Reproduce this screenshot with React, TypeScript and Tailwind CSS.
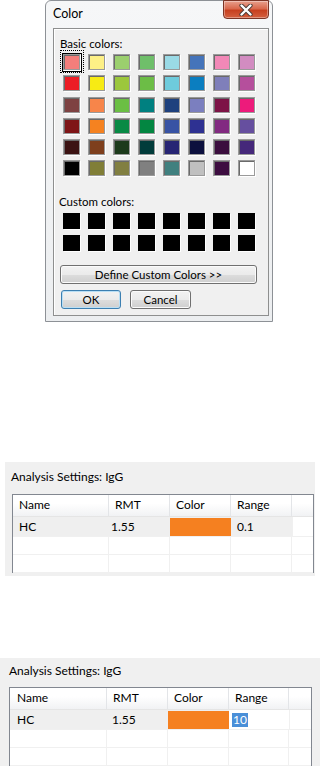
import React from 'react';

const basicColors = [
  ['bg-[#f47e7b]', 'bg-[#fdf086]', 'bg-[#9bcf6e]', 'bg-[#6fbf6a]', 'bg-[#9adae6]', 'bg-[#4574ba]', 'bg-[#f288b7]', 'bg-[#d28cc1]'],
  ['bg-[#ec1d25]', 'bg-[#f7eb14]', 'bg-[#9cc73c]', 'bg-[#6cbd46]', 'bg-[#6ecbdc]', 'bg-[#0b7ec0]', 'bg-[#7f7fba]', 'bg-[#b54f9c]'],
  ['bg-[#7e4242]', 'bg-[#f7854a]', 'bg-[#6bbf44]', 'bg-[#008080]', 'bg-[#1e417e]', 'bg-[#7b7fbf]', 'bg-[#7d1346]', 'bg-[#ed1b7b]'],
  ['bg-[#7f1517]', 'bg-[#f58220]', 'bg-[#088a45]', 'bg-[#038641]', 'bg-[#3853a4]', 'bg-[#2e3192]', 'bg-[#822a81]', 'bg-[#664f9f]'],
  ['bg-[#3c1313]', 'bg-[#7e3f1d]', 'bg-[#1c3a1b]', 'bg-[#023c3b]', 'bg-[#272574]', 'bg-[#0c103e]', 'bg-[#3b0e3e]', 'bg-[#45287a]'],
  ['bg-[#000000]', 'bg-[#807e37]', 'bg-[#817f41]', 'bg-[#808080]', 'bg-[#40807f]', 'bg-[#c0c0c0]', 'bg-[#3d0d40]', 'bg-[#ffffff]'],
];

function Swatch({ color, selected }: { color: string; selected?: boolean }) {
  return (
    <div className="relative h-[16px] w-[17px]">
      <div className={`h-full w-full border border-[#9a9a9a] shadow-[inset_1px_1px_0_#6a6a6a,1px_1px_0_#ffffff] ${color}`} />
      {selected && (
        <>
          <div className="absolute -left-px -top-px -right-[2px] -bottom-[2px] border border-black" />
          <div className="absolute -left-[3px] -top-[4px] -right-[4px] -bottom-[3px] border border-dotted border-black" />
        </>
      )}
    </div>
  );
}

function WinButton({ children, className, isDefault }: { children: React.ReactNode; className?: string; isDefault?: boolean }) {
  return (
    <div
      className={`flex h-[19px] items-center justify-center rounded-[3px] border text-[11.5px] text-black bg-[linear-gradient(to_bottom,#f2f2f2_0%,#ebebeb_50%,#dddddd_51%,#cfcfcf_100%)] ${
        isDefault
          ? 'border-[#3c7fb1] shadow-[inset_0_0_0_1px_#b9dff5]'
          : 'border-[#707070] shadow-[inset_0_0_0_1px_#fbfbfb]'
      } ${className ?? ''}`}
    >
      {children}
    </div>
  );
}

function ColorDialog() {
  return (
    <div className="ml-[45px] flex h-[322px] w-[228px] flex-col rounded-t-[6px] border border-[#8d9196] bg-[linear-gradient(to_bottom,#f6f7f8,#eceef0)] pb-[5px] pl-[7px] pr-[3px]">
      <div className="flex h-[27px] items-start justify-between">
        <span className="mt-[5px] text-[12.5px] leading-[16px] text-black">Color</span>
        <div className="-mt-px flex h-[19px] w-[46px] items-center justify-center rounded-b-[4px] border border-[#7b3425] bg-[linear-gradient(to_bottom,#e8a08d_0%,#d9694d_45%,#c7401f_55%,#d4603f_100%)] shadow-[inset_0_0_0_1px_rgba(255,255,255,0.35)]">
          <svg width="14" height="12" viewBox="0 0 14 12">
            <path d="M2.5 1.5 L11.5 10.5 M11.5 1.5 L2.5 10.5" stroke="#4a3a36" strokeWidth="4.2" strokeLinecap="round" fill="none" />
            <path d="M2.5 1.5 L11.5 10.5 M11.5 1.5 L2.5 10.5" stroke="#ffffff" strokeWidth="2.4" strokeLinecap="round" fill="none" />
          </svg>
        </div>
      </div>
      <div className="flex flex-1 flex-col border border-[#8e8f8f] bg-[#f0f0f0] text-[11.5px] leading-[13px] text-black shadow-[inset_1px_1px_0_#ffffff]">
        <div className="ml-[6px] mt-[8px]">Basic colors:</div>
        <div className="ml-[9px] mt-[4px] grid grid-cols-[repeat(8,17px)] gap-x-[8px] gap-y-[5.25px]">
          {basicColors.map((row, r) =>
            row.map((c, i) => <Swatch key={`${r}-${i}`} color={c} selected={r === 0 && i === 0} />)
          )}
        </div>
        <div className="ml-[5px] mt-[19px]">Custom colors:</div>
        <div className="ml-[9px] mt-[5px] grid grid-cols-[repeat(8,17px)] gap-x-[8px] gap-y-[5.5px]">
          {Array.from({ length: 16 }).map((_, i) => (
            <div key={i} className="h-[16px] w-[17px] bg-black shadow-[1px_1px_0_#ffffff]" />
          ))}
        </div>
        <WinButton className="ml-[6px] mt-[14px] w-[197px]">Define Custom Colors &gt;&gt;</WinButton>
        <div className="mt-[6px] flex gap-[9px] pl-[7px]">
          <WinButton isDefault className="w-[60px]">OK</WinButton>
          <WinButton className="w-[61px]">Cancel</WinButton>
        </div>
      </div>
    </div>
  );
}

type Col = { label: string; w: string; hpad: string };

function SettingsTable({
  cols,
  rmtPad,
  namePad,
  editing,
  className,
}: {
  cols: Col[];
  rmtPad: string;
  namePad: string;
  editing?: boolean;
  className?: string;
}) {
  return (
    <div className={`border-x border-t border-[#828790] bg-white text-[12px] text-black ${className ?? ''}`}>
      {/* header */}
      <div className="flex h-[22px] border-b border-[#e5e5e5] bg-[linear-gradient(to_bottom,#ffffff_0%,#ffffff_40%,#f1f2f4_100%)]">
        {cols.map((c) => (
          <div key={c.label} className={`${c.w} ${c.hpad} border-r border-[#e3e5e8] pt-[2px] leading-[16px]`}>
            {c.label}
          </div>
        ))}
        <div className="flex-1" />
      </div>
      {/* selected row */}
      <div className="flex h-[20px] border-b border-[#f0f0f0]">
        <div className={`${cols[0].w} ${namePad} bg-[#efefef] pt-[2px] leading-[16px]`}>HC</div>
        <div className={`${cols[1].w} ${rmtPad} bg-[#efefef] pt-[2px] leading-[16px]`}>1.55</div>
        <div className={`${cols[2].w} bg-[#efefef] pt-[1px]`}>
          <div className="h-full w-full bg-[#f58020]" />
        </div>
        {editing ? (
          <div className={`${cols[3].w} bg-white pl-[3px] pt-px`}>
            <span className="inline-block h-[14px] bg-[#4a8fd8] px-px text-[12px] leading-[14px] text-white">10</span>
          </div>
        ) : (
          <div className={`${cols[3].w} bg-[#efefef] pl-[6px] pt-[2px] leading-[16px]`}>0.1</div>
        )}
        <div className="flex-1 border-l border-[#f0f0f0]" />
      </div>
      {[0, 1].map((r) => (
        <div key={r} className="flex h-[18px] border-b border-[#f0f0f0]">
          {cols.map((c) => (
            <div key={c.label} className={`${c.w} border-r border-[#f0f0f0]`} />
          ))}
          <div className="flex-1" />
        </div>
      ))}
    </div>
  );
}

export default function App() {
  return (
    <div className="h-[766px] w-[320px] overflow-hidden bg-white font-['Lato','Noto_Sans',sans-serif]">
      <ColorDialog />

      <div className="ml-[5px] mt-[140px] h-[114px] w-[310px] overflow-hidden bg-[#f0f0f0]">
        <div className="pl-[6px] pt-[7px] text-[12px] leading-[16px] text-black">Analysis Settings: IgG</div>
        <SettingsTable
          className="ml-[7px] mt-[9px] w-[302px]"
          namePad="pl-[6px]"
          rmtPad="pl-[2px]"
          cols={[
            { label: 'Name', w: 'w-[96px]', hpad: 'pl-[6px]' },
            { label: 'RMT', w: 'w-[61px]', hpad: 'pl-[6px]' },
            { label: 'Color', w: 'w-[61px]', hpad: 'pl-[6px]' },
            { label: 'Range', w: 'w-[61px]', hpad: 'pl-[6px]' },
          ]}
        />
      </div>

      <div className="mt-[82px] h-[108px] w-[320px] overflow-hidden bg-[#f0f0f0]">
        <div className="pl-[9px] pt-[5px] text-[12px] leading-[16px] text-black">Analysis Settings: IgG</div>
        <SettingsTable
          className="ml-[9px] mt-[8px] w-[303px]"
          namePad="pl-[7px]"
          rmtPad="pl-[5px]"
          editing
          cols={[
            { label: 'Name', w: 'w-[97px]', hpad: 'pl-[7px]' },
            { label: 'RMT', w: 'w-[61px]', hpad: 'pl-[6px]' },
            { label: 'Color', w: 'w-[61px]', hpad: 'pl-[6px]' },
            { label: 'Range', w: 'w-[60px]', hpad: 'pl-[6px]' },
          ]}
        />
      </div>
    </div>
  );
}
